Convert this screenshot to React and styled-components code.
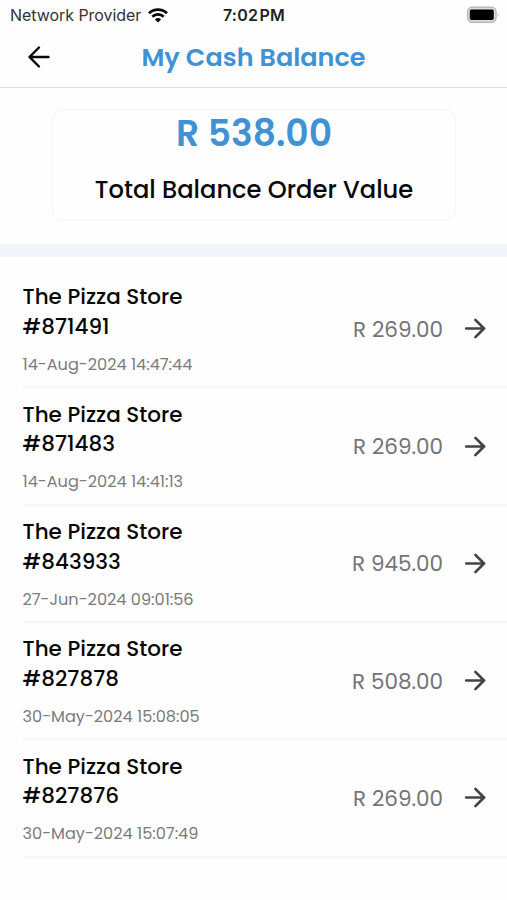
import React from "react";
import styled, { createGlobalStyle } from "styled-components";

const GlobalStyle = createGlobalStyle`
  * {
    box-sizing: border-box;
  }
  body {
    margin: 0;
    background: #fefefe;
    color: #080808;
    font-family: Poppins, Inter, sans-serif;
  }
`;

const Screen = styled.div`
  min-height: 900px;
  overflow: hidden;
`;
const StatusBar = styled.div`
  display: grid;
  grid-template-columns: 1fr auto 1fr;
  align-items: center;
  height: 28px;
  padding: 2px 9px 0 10px;
  font-family: Inter, sans-serif;
  font-size: 16px;
  line-height: 20px;
`;
const Provider = styled.div`
  display: flex;
  align-items: center;
  gap: 7px;
  color: #333;
  letter-spacing: -0.05px;
`;
const Time = styled.div`
  color: #222;
  font-weight: 600;
  letter-spacing: 0.2px;
  word-spacing: -2.8px;
`;
const BatteryIcon = styled.svg`
  justify-self: end;
  margin: -1px -2px 0 0;
`;
const Header = styled.header`
  display: grid;
  grid-template-columns: 60px 1fr 60px;
  align-items: center;
  height: 60px;
  padding-bottom: 1px;
  border-bottom: 1.5px solid #dedede;
`;
const BackButton = styled.button`
  display: flex;
  margin: 0;
  padding: 0 0 0 27px;
  border: none;
  background: none;
  color: #080808;
`;
const Title = styled.h1`
  margin: 0;
  color: #4092d4;
  font-size: 25.5px;
  font-weight: 600;
  line-height: 34px;
  text-align: center;
`;
const Summary = styled.section`
  padding: 21px 51px 23px 52px;
  border-bottom: 13px solid #f3f5fd;
`;
const Card = styled.div`
  height: 112px;
  border: 1.5px solid #f5f5f5;
  border-radius: 11px;
  text-align: center;
`;
const Total = styled.div`
  color: #4092d4;
  font-size: 36.2px;
  font-weight: 600;
  line-height: 47px;
`;
const TotalLabel = styled.div`
  margin-top: 18px;
  font-size: 24.2px;
  font-weight: 500;
  line-height: 30px;
`;
const List = styled.ul`
  margin: 0;
  padding: 14.1px 0 0 22.5px;
  list-style: none;
`;
const Row = styled.li`
  display: flex;
  align-items: center;
  height: 117.3px;
  padding: 1px 20px 0 0;
  border-bottom: 2px solid #f6f6f6;
`;
const Details = styled.div`
  flex: 1;
  padding-top: 1px;
`;
const Name = styled.div`
  font-size: 21.5px;
  font-weight: 500;
  line-height: 29.5px;
`;
const Stamp = styled.div`
  margin-top: 11.5px;
  color: #7b7b7b;
  font-size: 16.15px;
  line-height: 24px;
`;
const Amount = styled.div`
  margin-right: 20px;
  color: #747474;
  font-size: 21.5px;
`;

const orders = [
  { id: "871491", date: "14-Aug-2024 14:47:44", amount: "269.00" },
  { id: "871483", date: "14-Aug-2024 14:41:13", amount: "269.00" },
  { id: "843933", date: "27-Jun-2024 09:01:56", amount: "945.00" },
  { id: "827878", date: "30-May-2024 15:08:05", amount: "508.00" },
  { id: "827876", date: "30-May-2024 15:07:49", amount: "269.00" },
];

function Wifi() {
  return (
    <svg width="20" height="15" viewBox="0 0 20 15" fill="none" stroke="#080808" strokeWidth="2.7">
      <path d="M1 5.2a13 13 0 0 1 18 0" />
      <path d="M4.3 8.7a8.2 8.2 0 0 1 11.4 0" />
      <path d="M10 14.6 6.9 11.5a4.5 4.5 0 0 1 6.2 0z" fill="#080808" stroke="none" />
    </svg>
  );
}

function Battery() {
  return (
    <BatteryIcon width="34" height="18" viewBox="0 0 34 18">
      <rect x="1.6" y="1.2" width="28.4" height="15" rx="4.5" fill="#ddd" stroke="#b8b8b8" strokeWidth="1.4" />
      <rect x="3.8" y="3.5" width="24" height="10.4" rx="1.6" fill="#000" />
      <path d="M31.8 6.4q1.6 2.3 0 4.6z" fill="#aaa" />
    </BatteryIcon>
  );
}

function BackArrow() {
  return (
    <svg width="24" height="24" viewBox="0 0 24 24" fill="none" stroke="currentColor" strokeWidth="2.4" strokeLinecap="round" strokeLinejoin="round">
      <path d="M21.5 12H2.5M12 2.5 2.5 12l9.5 9.5" />
    </svg>
  );
}

function NextArrow() {
  return (
    <svg width="24" height="24" viewBox="0 0 24 24" fill="none" stroke="#444" strokeWidth="2.7" strokeLinecap="round" strokeLinejoin="round">
      <path d="M3.2 11.5h18M12.4 2.9l8.6 8.6-8.6 8.6" />
    </svg>
  );
}

export default function App() {
  return (
    <Screen>
      <GlobalStyle />
      <StatusBar>
        <Provider>
          Network Provider
          <Wifi />
        </Provider>
        <Time>7:02 PM</Time>
        <Battery />
      </StatusBar>
      <Header>
        <BackButton aria-label="Back">
          <BackArrow />
        </BackButton>
        <Title>My Cash Balance</Title>
      </Header>
      <Summary>
        <Card>
          <Total>R 538.00</Total>
          <TotalLabel>Total Balance Order Value</TotalLabel>
        </Card>
      </Summary>
      <List>
        {orders.map((order) => (
          <Row key={order.id}>
            <Details>
              <Name>The Pizza Store</Name>
              <Name>#{order.id}</Name>
              <Stamp>{order.date}</Stamp>
            </Details>
            <Amount>R {order.amount}</Amount>
            <NextArrow />
          </Row>
        ))}
      </List>
    </Screen>
  );
}
